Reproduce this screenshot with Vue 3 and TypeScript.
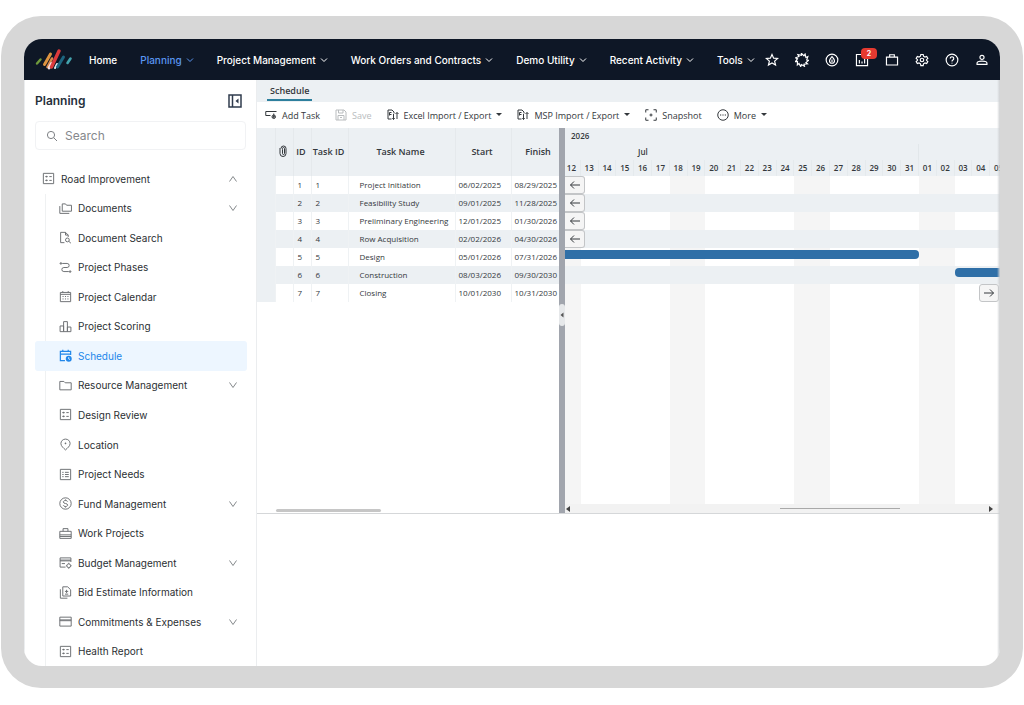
<script setup lang="ts">
import { ref } from 'vue'

interface NavItem { label: string; menu: boolean; active?: boolean }
interface SideItem { label: string; icon: string; expandable?: boolean; active?: boolean }
interface Tool { label: string; icon: string; caret?: boolean; disabled?: boolean }
interface Task { id: number; name: string; start: string; finish: string }
interface Day { label: string; weekend: boolean }

const nav: NavItem[] = [
  { label: 'Home', menu: false },
  { label: 'Planning', menu: true, active: true },
  { label: 'Project Management', menu: true },
  { label: 'Work Orders and Contracts', menu: true },
  { label: 'Demo Utility', menu: true },
  { label: 'Recent Activity', menu: true },
  { label: 'Tools', menu: true },
]

const actions: { label: string; icon: string; badge?: number }[] = [
  { label: 'Favorites', icon: 'star' },
  { label: 'Assistant', icon: 'burst' },
  { label: 'Currency', icon: 'drop' },
  { label: 'Reports', icon: 'chart', badge: 2 },
  { label: 'Portfolio', icon: 'bag' },
  { label: 'Settings', icon: 'gear' },
  { label: 'Help', icon: 'help' },
  { label: 'Account', icon: 'person' },
]

const sideItems: SideItem[] = [
  { label: 'Documents', icon: 'folders', expandable: true },
  { label: 'Document Search', icon: 'docSearch' },
  { label: 'Project Phases', icon: 'route' },
  { label: 'Project Calendar', icon: 'calendar' },
  { label: 'Project Scoring', icon: 'bars' },
  { label: 'Schedule', icon: 'schedule', active: true },
  { label: 'Resource Management', icon: 'folder', expandable: true },
  { label: 'Design Review', icon: 'form' },
  { label: 'Location', icon: 'pin' },
  { label: 'Project Needs', icon: 'list' },
  { label: 'Fund Management', icon: 'dollar', expandable: true },
  { label: 'Work Projects', icon: 'toolbox' },
  { label: 'Budget Management', icon: 'budget', expandable: true },
  { label: 'Bid Estimate Information', icon: 'bid' },
  { label: 'Commitments & Expenses', icon: 'card', expandable: true },
  { label: 'Health Report', icon: 'form' },
]

const tools: Tool[] = [
  { label: 'Add Task', icon: 'addTask' },
  { label: 'Save', icon: 'save', disabled: true },
  { label: 'Excel Import / Export', icon: 'transfer', caret: true },
  { label: 'MSP Import / Export', icon: 'transfer', caret: true },
  { label: 'Snapshot', icon: 'snapshot' },
  { label: 'More', icon: 'more', caret: true },
]

const tasks: Task[] = [
  { id: 1, name: 'Project Initiation', start: '06/02/2025', finish: '08/29/2025' },
  { id: 2, name: 'Feasibility Study', start: '09/01/2025', finish: '11/28/2025' },
  { id: 3, name: 'Preliminary Engineering', start: '12/01/2025', finish: '01/30/2026' },
  { id: 4, name: 'Row Acquisition', start: '02/02/2026', finish: '04/30/2026' },
  { id: 5, name: 'Design', start: '05/01/2026', finish: '07/31/2026' },
  { id: 6, name: 'Construction', start: '08/03/2026', finish: '09/30/2030' },
  { id: 7, name: 'Closing', start: '10/01/2030', finish: '10/31/2030' },
]

const DAY_MS = 86400000
const firstDay = Date.UTC(2026, 6, 12)
const dayCount = 25
const days: Day[] = Array.from({ length: dayCount }, (_, i) => {
  const d = new Date(firstDay + i * DAY_MS)
  const wd = d.getUTCDay()
  return { label: String(d.getUTCDate()).padStart(2, '0'), weekend: wd === 0 || wd === 6 }
})

function dayIndex(text: string): number {
  const [m, d, y] = text.split('/').map(Number)
  return Math.round((Date.UTC(y, m - 1, d) - firstDay) / DAY_MS)
}

const bars = tasks.map((t) => {
  const from = dayIndex(t.start)
  const to = dayIndex(t.finish) + 1
  const a = Math.max(0, from)
  const b = Math.min(dayCount, to)
  return {
    id: t.id,
    before: to <= 0,
    after: from >= dayCount,
    opens: from >= 0,
    closes: to <= dayCount,
    left: (a / dayCount) * 100 + '%',
    width: (Math.max(0, b - a) / dayCount) * 100 + '%',
  }
})

const query = ref('')

// Ring whose rim is cut into slanted teeth
function sunburst(teeth: number): string {
  const point = (r: number, a: number) => `${(12 + r * Math.cos(a)).toFixed(1)} ${(12 + r * Math.sin(a)).toFixed(1)}`
  const pts: string[] = []
  for (let i = 0; i < teeth; i++) {
    const a = (i / teeth) * Math.PI * 2
    pts.push(point(8, a), point(11.5, a + 0.05))
  }
  return 'M' + pts.join('L') + 'z'
}

const icons: Record<string, string[]> = {
  star: ['M12 2.5l2.8 6.3 6.9.6-5.2 4.5 1.6 6.8-6.1-3.6-6.1 3.6 1.6-6.8-5.2-4.5 6.9-.6z'],
  burst: [sunburst(11)],
  drop: ['M12 2a10 10 0 1 0 0 20 10 10 0 0 0 0-20', 'M12 6c2.500 3 4.300 5 4.300 7.300a4.300 4.300 0 0 1-8.600 0C7.700 11 9.500 9 12 6z', 'M12 11v5'],
  chart: ['M2.500 2.500h19v19h-19z', 'M7.500 12v6M12 14.500v3.500M16.500 9v9'],
  bag: ['M2.500 7h19v13.500h-19z', 'M8 7V3h8v4'],
  gear: ['M10 2.500h4l.6 3 2.500 1.400 2.900-1 2 3.500-2.300 2v1.200l2.300 2-2 3.500-2.900-1-2.500 1.400-.6 3h-4l-.6-3-2.500-1.400-2.900 1-2-3.500 2.300-2v-1.200L2 9.400l2-3.500 2.900 1 2.500-1.400z', 'M12 9a3 3 0 1 0 0 6 3 3 0 0 0 0-6'],
  help: ['M12 2a10 10 0 1 0 0 20 10 10 0 0 0 0-20', 'M9 9.500a3 3 0 1 1 4.500 2.600c-1 .6-1.500 1.200-1.500 2.400M12 16.500v1.600'],
  person: ['M12 4a3.500 3.500 0 1 0 0 7 3.500 3.500 0 0 0 0-7', 'M3.500 19.500v-2c0-2 4-3.500 8.500-3.500s8.500 1.500 8.500 3.500v2z'],
  form: ['M2.500 2.500h19v19h-19z', 'M6 8.500h4.500M13.500 8.500H18M6 15.500h4.500M13.500 15.500H18', 'M8.500 7v3M8.500 14v3'],
  folders: ['M6 3.500h6l2 2.500h9V17H6z', 'M1.500 7.500V21H19'],
  folder: ['M1.500 4.500h7.500l2.500 2.500h11v13h-21z'],
  docSearch: ['M10 21.500H3v-19h9l5 5V11', 'M12 2.500v5h5', 'M15.500 13a3.500 3.500 0 1 0 0 7 3.500 3.500 0 0 0 0-7M18 19l4 3.500'],
  route: ['M6 4.500h9a3.700 3.700 0 0 1 0 7.500H9a3.700 3.700 0 0 0 0 7.500h9', 'M3.500 3a1.500 1.500 0 1 0 0 3 1.500 1.500 0 0 0 0-3M20.500 18a1.500 1.500 0 1 0 0 3 1.500 1.500 0 0 0 0-3', 'M2.500 4.500h2M19.500 19.500h2'],
  calendar: ['M2.500 4.500h19v17h-19z', 'M2.500 8h19M7 2v2.500M17 2v2.500', 'M6.500 12h2M11 12h2M15.500 12h2M6.500 16.500h2M11 16.500h2M15.500 16.500h2'],
  bars: ['M2 11h6.500v10.500H2z', 'M8.500 3h7v18.500h-7z', 'M15.500 13H22v8.500h-6.500z'],
  schedule: ['M11 21.500H2.500v-17h19V11', 'M2.500 9.500h19M7 1.500v3M17 1.500v3'],
  pin: ['M12 2c-4.700 0-8.500 3.700-8.500 8.200 0 4.800 5 8.500 8.500 11.800 3.500-3.300 8.500-7 8.500-11.800C20.500 5.700 16.700 2 12 2z', 'M12 8.500v3M10.500 10h3'],
  list: ['M2.500 2.500h19v19h-19z', 'M6 8h2.500M6 12h2.500M6 16h2.500M11 8h7M11 12h7M11 16h7'],
  dollar: ['M12 1.500a10.500 10.500 0 1 0 0 21 10.500 10.500 0 0 0 0-21', 'M16 8.500C15.500 7 14 6.500 12 6.500c-2.500 0-4 1-4 2.700 0 4 8 1.700 8 5.600 0 1.700-1.500 2.700-4 2.700-2.200 0-3.700-.7-4.200-2.200M12 4.500v2M12 17.500v2'],
  toolbox: ['M1.500 8h21v13h-21z', 'M7.500 8V3h9v5M1.500 14.500h21M1.500 17.500h21'],
  budget: ['M12 20.500H2v-17h20V11', 'M2 7.500h20M2 9h20M5 14h6', 'M18 14.500a3.500 3.500 0 1 0 0 7 3.500 3.500 0 0 0 0-7M18 12.500v2M18 21.500v2M12.800 18h1.700M21.500 18h1.700'],
  bid: ['M7 1.500h9l5.500 5.500v11.500H7z', 'M2.500 6v16.500h13', 'M14 7v6M11 10h6M11 15h6'],
  card: ['M1.500 4h21v16.500h-21z', 'M1.500 9h21M1.500 10.500h21'],
  addTask: ['M11 13H1.500V5H23', 'M17.500 12a3.500 3.500 0 1 0 0 7 3.500 3.500 0 0 0 0-7M17.500 9v9M15 15.500h5'],
  save: ['M2 2h16l4 4v16H2z', 'M7 2v6h9V2M6 22v-9h12v9M10 17h4'],
  transfer: ['M9 20H2V2h8l4 4v3', 'M5 7h4M5 11h4M5 7v6', 'M13 10v11M10.500 18.500L13 21l2.500-2.500M20 20V7M17 10l3-3 3 3'],
  snapshot: ['M7 1.500H1.500V7M17 1.500h5.500V7M7 22.500H1.500V17M17 22.500h5.500V17', 'M12 9v6M9 12h6'],
  more: ['M12 1.500a10.500 10.500 0 1 0 0 21 10.500 10.500 0 0 0 0-21', 'M6 12h2.500M10.800 12h2.400M15.500 12H18'],
}
</script>

<template>
  <div class="device">
    <div class="screen">
      <header class="topbar">
        <a class="logo" href="#" aria-label="Dashboard">
          <svg viewBox="0 0 38 22" fill="none" stroke-linecap="round">
            <path d="M2 14.500L5.500 10.500" stroke="#6f9b3c" stroke-width="2.400" />
            <path d="M9.500 15.500L15.500 5" stroke="#dd9440" stroke-width="3" />
            <path d="M12.500 18L17 9.500" stroke="#d98a4c" stroke-width="2.600" />
            <path d="M14 19L16.500 14.500" stroke="#f3dfe0" stroke-width="2.800" />
            <path d="M16.500 18L24 2" stroke="#dd3a3c" stroke-width="3.400" />
            <path d="M20 19L22 15" stroke="#dfe9ee" stroke-width="2" />
            <path d="M22.500 18L28.500 8" stroke="#1d6680" stroke-width="3" />
            <path d="M32.500 14L35.500 9.500" stroke="#43a3ad" stroke-width="2.600" />
          </svg>
        </a>
        <nav class="nav" aria-label="Main">
          <a v-for="n in nav" :key="n.label" href="#" class="nav-item" :class="{ active: n.active }">
            {{ n.label }}
            <svg v-if="n.menu" class="chev" viewBox="0 0 8 8"><path d="M1 2.500l3 3 3-3" /></svg>
          </a>
        </nav>
        <div class="actions">
          <button v-for="a in actions" :key="a.label" type="button" class="action" :aria-label="a.label">
            <svg class="icon" viewBox="0 0 24 24"><path v-for="d in icons[a.icon]" :key="d" :d="d" /></svg>
            <span v-if="a.badge" class="badge">{{ a.badge }}</span>
          </button>
        </div>
      </header>

      <div class="body">
        <aside class="sidebar">
          <div class="side-head">
            <h1>Planning</h1>
            <button type="button" class="collapse" aria-label="Collapse sidebar">
              <svg viewBox="0 0 14 14"><path d="M1 1h12v12H1zM4.500 1v12" /><path class="solid" d="M10.500 4.500v5L7.500 7z" /></svg>
            </button>
          </div>
          <label class="search">
            <svg viewBox="0 0 12 12"><circle cx="5" cy="5" r="3.600" /><path d="M7.800 7.800L11 11" /></svg>
            <input v-model="query" type="search" placeholder="Search" aria-label="Search" />
          </label>
          <ul class="tree">
            <li>
              <button type="button" class="side-item root" aria-expanded="true">
                <svg class="icon" viewBox="0 0 24 24"><path v-for="d in icons.form" :key="d" :d="d" /></svg>
                <span>Road Improvement</span>
                <svg class="arrow" viewBox="0 0 10 10"><path d="M1.500 7.500l3.500-5 3.500 5" /></svg>
              </button>
            </li>
            <li v-for="s in sideItems" :key="s.label" class="child">
              <component
                :is="s.expandable ? 'button' : 'a'"
                :href="s.expandable ? undefined : '#'"
                :type="s.expandable ? 'button' : undefined"
                class="side-item"
                :class="{ active: s.active }"
              >
                <svg class="icon" viewBox="0 0 24 24">
                  <path v-for="d in icons[s.icon]" :key="d" :d="d" />
                  <template v-if="s.icon === 'schedule'">
                    <circle class="clock" cx="18" cy="18" r="5.500" />
                    <path class="hand" d="M18 15v3.500l2 1" />
                  </template>
                </svg>
                <span>{{ s.label }}</span>
                <svg v-if="s.expandable" class="arrow" viewBox="0 0 10 10"><path d="M1.500 2.500l3.500 5 3.500-5" /></svg>
              </component>
            </li>
          </ul>
        </aside>

        <main class="main">
          <div class="tabs" role="tablist">
            <button type="button" role="tab" aria-selected="true" class="tab">Schedule</button>
          </div>
          <div class="toolbar" role="toolbar" aria-label="Schedule tools">
            <button v-for="t in tools" :key="t.label" type="button" class="tool" :disabled="t.disabled">
              <svg class="icon" viewBox="0 0 24 24"><path v-for="d in icons[t.icon]" :key="d" :d="d" /></svg>
              {{ t.label }}
              <svg v-if="t.caret" class="caret" viewBox="0 0 6 4"><path d="M0 0h6L3 3z" /></svg>
            </button>
          </div>

          <div class="gantt">
            <section class="grid-pane">
              <table>
                <colgroup>
                  <col class="c-gutter" /><col class="c-clip" /><col class="c-id" /><col class="c-task" />
                  <col class="c-name" /><col class="c-start" /><col class="c-finish" />
                </colgroup>
                <thead>
                  <tr>
                    <th></th>
                    <th>
                      <svg class="clip" viewBox="0 0 8 12" role="img" aria-label="Attachments">
                        <path d="M1 3v5.500a3 3 0 0 0 6 0v-5a2.500 2.500 0 0 0-5 0M3.500 4.500v4a1 1 0 0 0 2 0v-5a1 1 0 0 0-2 0z" />
                      </svg>
                    </th>
                    <th>ID</th>
                    <th>Task ID</th>
                    <th>Task Name</th>
                    <th>Start</th>
                    <th class="finish">Finish</th>
                  </tr>
                </thead>
                <tbody>
                  <tr v-for="t in tasks" :key="t.id">
                    <td></td>
                    <td></td>
                    <td class="num">{{ t.id }}</td>
                    <td class="num">{{ t.id }}</td>
                    <td class="name">{{ t.name }}</td>
                    <td>{{ t.start }}</td>
                    <td>{{ t.finish }}</td>
                  </tr>
                </tbody>
              </table>
              <div class="grid-scroll"><span></span></div>
            </section>

            <div class="splitter" role="separator" aria-orientation="vertical">
              <svg class="grip" viewBox="0 0 6 22"><path d="M4.500 8.500v5L1.500 11z" /></svg>
            </div>

            <section class="chart-pane">
              <div class="scale">
                <div class="year">2026</div>
                <div class="track">
                  <div class="month july">Jul</div>
                  <div class="month"></div>
                </div>
                <div class="track">
                  <div v-for="d in days" :key="d.label" class="day">{{ d.label }}</div>
                </div>
              </div>
              <div class="chart">
                <div class="track backdrop">
                  <div v-for="d in days" :key="d.label" :class="{ weekend: d.weekend }"></div>
                </div>
                <div v-for="b in bars" :key="b.id" class="lane">
                  <div v-if="!b.before && !b.after" class="lane-track">
                    <div
                      class="bar"
                      :class="{ opens: b.opens, closes: b.closes }"
                      :style="{ left: b.left, width: b.width }"
                    ></div>
                  </div>
                  <button v-else type="button" class="jump" :class="{ right: b.after }" :aria-label="'Scroll to task ' + b.id">
                    <svg viewBox="0 0 12 10">
                      <path v-if="b.before" d="M11 5H1.500M5 1.500L1.500 5 5 8.500" />
                      <path v-else d="M1 5h9.500M7 1.500L10.500 5 7 8.500" />
                    </svg>
                  </button>
                </div>
              </div>
              <div class="chart-scroll">
                <svg viewBox="0 0 4 6"><path d="M4 0v6L0 3z" /></svg>
                <span class="thumb"></span>
                <svg viewBox="0 0 4 6"><path d="M0 0v6l4-3z" /></svg>
              </div>
            </section>
          </div>
        </main>
      </div>
    </div>
  </div>
</template>

<style>
body {
  margin: 0;
  background: #fff;
}
</style>

<style scoped>
* {
  box-sizing: border-box;
}
button,
input {
  font: inherit;
  color: inherit;
  background: none;
  border: 0;
  padding: 0;
  margin: 0;
}
a {
  color: inherit;
  text-decoration: none;
}
svg {
  fill: none;
  stroke: currentColor;
  flex: none;
  display: block;
}
.device {
  margin: 16px 1px 0;
  min-height: calc(100vh - 33px);
  border: 23px solid #d7d7d7;
  border-bottom-width: 22px;
  border-radius: 40px;
  background: #d7d7d7;
  display: flex;
}
.screen {
  flex: 1;
  min-width: 0;
  border-radius: 18px;
  overflow: hidden;
  background: #fff;
  display: flex;
  flex-direction: column;
  font-family: Inter, "Liberation Sans", sans-serif;
}
.topbar {
  height: 41px;
  background: #0e1726;
  color: #fff;
  display: flex;
  align-items: center;
  padding: 0 11px;
}
.logo svg {
  width: 38px;
  height: 22px;
}
.nav {
  display: flex;
  gap: 23px;
  margin-left: 16px;
  font-size: 10px;
  font-weight: 500;
  white-space: nowrap;
}
.nav-item {
  display: flex;
  align-items: center;
  gap: 4px;
}
.nav-item.active {
  color: #5a96f2;
}
.chev {
  width: 8px;
  height: 8px;
}
.actions {
  display: flex;
  margin-left: auto;
  gap: 16px;
}
.action {
  position: relative;
  width: 14px;
  height: 14px;
}
.action .icon {
  width: 14px;
  height: 14px;
  stroke-width: 2;
}
.badge {
  position: absolute;
  left: 6px;
  top: -5px;
  width: 16px;
  height: 11px;
  border-radius: 4px;
  background: #e53a30;
  color: #fff;
  font-size: 7px;
  line-height: 11px;
  font-weight: 700;
  text-align: center;
}
.body {
  flex: 1;
  display: flex;
  min-height: 0;
}
.sidebar {
  width: 233px;
  flex: none;
  border-right: 1px solid #ebedef;
  border-left: 1px solid #ebedef;
  display: flex;
  flex-direction: column;
  color: #2b2f33;
}
.side-head {
  display: flex;
  align-items: center;
  justify-content: space-between;
  height: 41px;
  padding: 0 14px 0 10px;
}
.side-head h1 {
  margin: 0;
  font-size: 12px;
  font-weight: 600;
  color: #26303c;
}
.collapse svg {
  width: 14px;
  height: 14px;
  stroke-width: 1.5;
  color: #2f3b4d;
}
.solid {
  fill: currentColor;
  stroke: none;
}
.search {
  margin: 0 10px;
  height: 29px;
  border: 1px solid #f1f2f4;
  border-radius: 4px;
  display: flex;
  align-items: center;
  gap: 7px;
  padding: 0 10px;
  color: #7d8084;
}
.search svg {
  width: 12px;
  height: 12px;
}
.search input {
  flex: 1;
  min-width: 0;
  outline: 0;
  font-size: 12px;
}
.search input::placeholder {
  color: #85888c;
}
.tree {
  list-style: none;
  margin: 14px 0 0;
  padding: 0;
  flex: 1;
  display: grid;
  grid-auto-rows: minmax(29px, 1fr);
  font-size: 10px;
}
.tree li {
  display: flex;
  padding: 0 9px 0 10px;
}
.child {
  background: linear-gradient(#eff1f2, #eff1f2) 20px 0 / 1px 100% no-repeat;
}
.side-item {
  flex: 1;
  display: flex;
  align-items: center;
  gap: 6px;
  padding: 0 9px 0 24px;
  border-radius: 3px;
  text-align: left;
}
.side-item.root {
  padding-left: 7px;
}
.side-item.active {
  background: #edf6ff;
  color: #2287ea;
}
.side-item .icon {
  width: 13px;
  height: 13px;
  stroke-width: 1.8;
  color: #6d7073;
}
.side-item.active .icon {
  color: #2287ea;
  stroke-width: 2.2;
}
.side-item .clock {
  fill: currentColor;
  stroke: none;
}
.side-item .hand {
  stroke: #fff;
  stroke-width: 1.5;
}
.arrow {
  width: 10px;
  height: 10px;
  margin-left: auto;
  color: #85898c;
}
.main {
  position: relative;
  flex: 1;
  min-width: 0;
  display: flex;
  flex-direction: column;
  font-family: "Open Sans", "Noto Sans", sans-serif;
  color: #34383c;
}
.main::after {
  content: "";
  position: absolute;
  inset: 0 0 0 auto;
  width: 3px;
  background: linear-gradient(90deg, transparent, #cfd1d3);
}
.tabs {
  height: 22px;
  background: #ecf0f3;
  padding-left: 10px;
  display: flex;
}
.tab {
  font-size: 9px;
  font-weight: 600;
  padding: 2px 3px 0;
  height: 21px;
  border-bottom: 2px solid #2d7f9d;
}
.toolbar {
  height: 26px;
  display: flex;
  align-items: center;
  gap: 15px;
  padding-left: 8px;
  font-size: 9px;
  font-weight: 500;
  white-space: nowrap;
}
.tool {
  display: flex;
  align-items: center;
  gap: 5px;
}
.tool:disabled {
  color: #b9bcbe;
}
.tool .icon {
  width: 12px;
  height: 12px;
  stroke-width: 2;
}
.caret {
  width: 6px;
  height: 4px;
  fill: currentColor;
  stroke: none;
}
.gantt {
  height: 386px;
  display: flex;
  border-bottom: 1px solid #d5d7d9;
}
.grid-pane {
  width: 302px;
  flex: none;
  display: flex;
  flex-direction: column;
  overflow: hidden;
}
table {
  width: 302px;
  table-layout: fixed;
  border-collapse: collapse;
  white-space: nowrap;
}
.c-gutter { width: 18px; }
.c-clip { width: 18px; }
.c-id { width: 18px; }
.c-task { width: 37px; }
.c-name { width: 107px; }
.c-start { width: 56px; }
.c-finish { width: 48px; }
thead tr {
  height: 48px;
  background: #ecf0f3;
}
th {
  padding: 0 2px 2px 0;
  font-size: 9px;
  font-weight: 600;
  border-right: 1px solid #e5e9ec;
}
th.finish {
  padding-left: 8px;
}
tbody tr {
  height: 18px;
}
tbody tr:nth-child(even) {
  background: #ecf0f3;
}
td {
  padding: 0 0 0 3px;
  font-size: 8px;
  line-height: 16px;
  border-right: 1px solid #eff2f4;
}
td:first-child {
  background: #ecf0f3;
}
td.num {
  padding-left: 4px;
}
td.name {
  padding-left: 11px;
}
.clip {
  width: 8px;
  height: 12px;
  margin: 0 auto;
}
.grid-scroll {
  margin-top: auto;
  height: 4px;
  padding-left: 19px;
}
.grid-scroll span {
  display: block;
  width: 105px;
  height: 3px;
  border-radius: 2px;
  background: #c6c6c6;
}
.splitter {
  width: 6px;
  flex: none;
  background: #a1a5ad;
  display: flex;
  align-items: center;
  padding-bottom: 12px;
}
.grip {
  width: 6px;
  height: 22px;
  border-radius: 3px;
  background: #e6e8ea;
  fill: #555;
  stroke: none;
}
.chart-pane {
  flex: 1;
  min-width: 0;
  overflow: hidden;
  display: flex;
  flex-direction: column;
}
.scale {
  background: #ecf0f3;
  height: 48px;
  font-size: 8px;
  line-height: 16px;
  font-weight: 600;
}
.year {
  padding-left: 6px;
}
.track {
  display: grid;
  grid-template-columns: repeat(25, minmax(0, 1fr));
  width: calc(100% + 10px);
  margin-left: -2px;
}
.month {
  grid-column: span 5;
  height: 16px;
}
.month.july {
  grid-column: span 20;
  border-right: 1px solid #e2e7ea;
  padding-left: 75px;
}
.day {
  text-align: center;
  border-right: 1px solid #e5eaed;
}
.chart {
  position: relative;
  flex: 1;
}
.backdrop {
  position: absolute;
  inset: 0 auto 0 0;
}
.weekend {
  background: #f5f5f5;
}
.lane {
  position: relative;
  height: 18px;
  display: flex;
}
.lane:nth-child(odd) {
  background: #ecf0f3;
}
.lane:last-child {
  background: none;
}
.lane-track {
  position: relative;
  flex: none;
  width: calc(100% + 10px);
  margin-left: -2px;
}
.bar {
  position: absolute;
  top: 2px;
  height: 9px;
  background: #2f6fa7;
}
.bar.opens {
  border-radius: 4px 0 0 4px;
}
.bar.closes {
  border-radius: 0 4px 4px 0;
}
.jump {
  width: 20px;
  height: 18px;
  border: 1px solid #c3c5c7;
  border-left: 0;
  border-radius: 0 3px 3px 0;
  background: #f5f5f5;
  display: grid;
  place-items: center;
}
.jump.right {
  margin-left: auto;
  margin-right: 1px;
  border-left: 1px solid #c3c5c7;
  border-radius: 3px;
}
.jump svg {
  width: 12px;
  height: 10px;
}
.chart-scroll {
  height: 9px;
  background: #f2f2f2;
  display: flex;
  align-items: center;
  justify-content: space-between;
  padding: 0 7px 0 1px;
}
.chart-scroll svg {
  width: 4px;
  height: 6px;
  fill: #444;
  stroke: none;
}
.thumb {
  width: 120px;
  height: 1px;
  background: #a9a9a9;
  margin-left: auto;
  margin-right: 89px;
}
</style>
